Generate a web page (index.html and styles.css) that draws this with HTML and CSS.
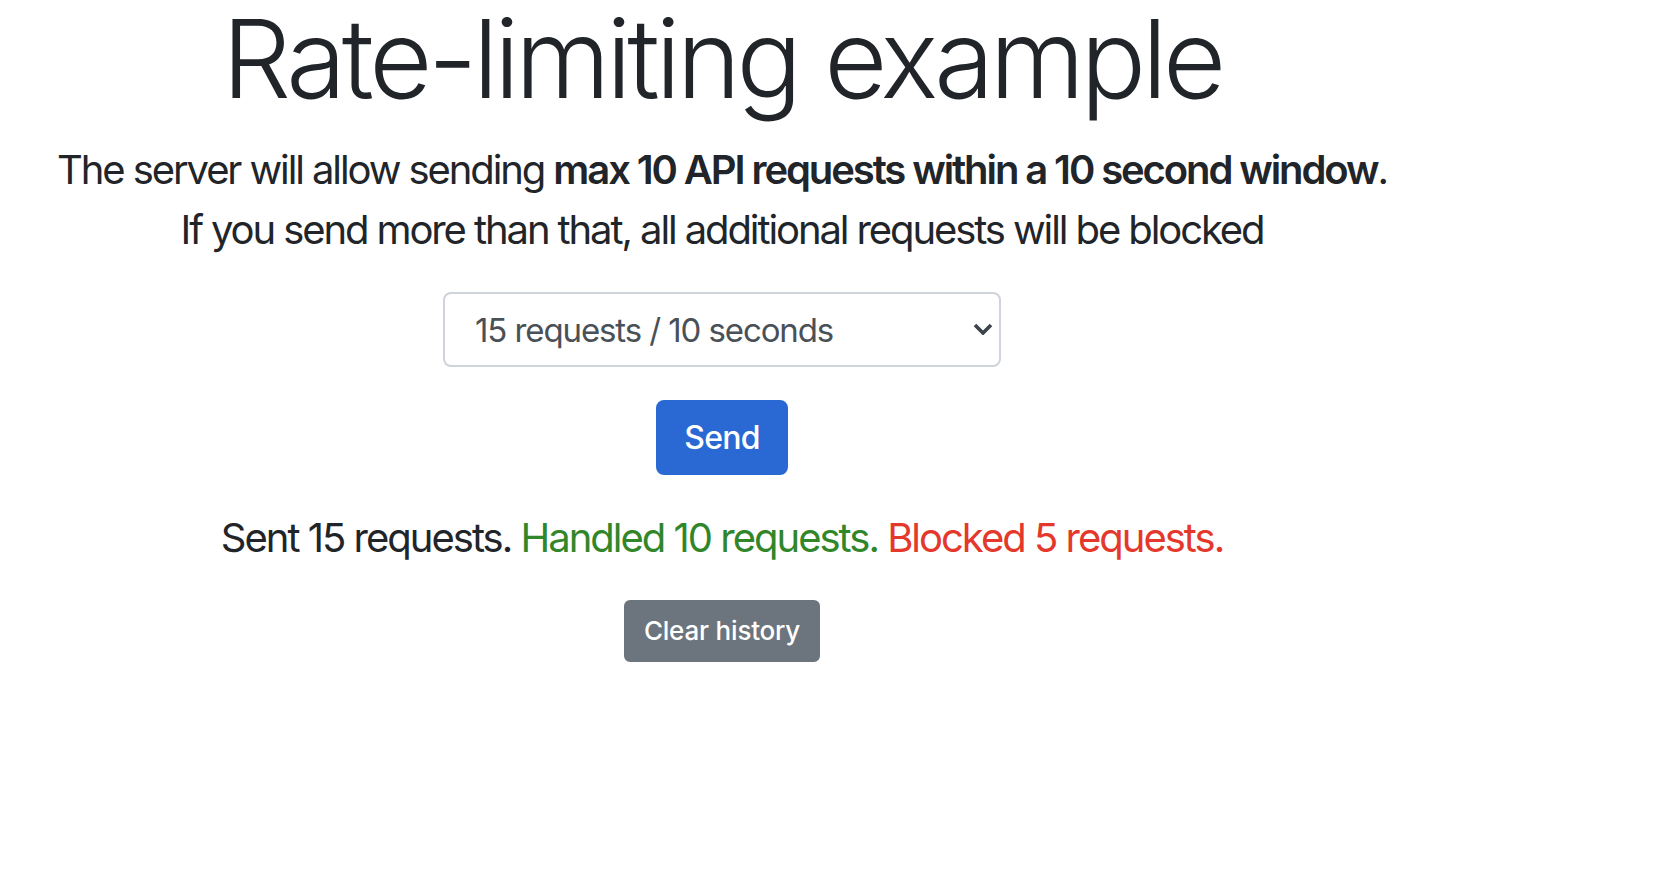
FILE: index.html
```html
<!DOCTYPE html>
<html lang="en">
<head>
<meta charset="utf-8">
<title>Rate-limiting example</title>
<link rel="stylesheet" href="styles.css">
</head>
<body>
<main class="page">
  <h1 class="title">Rate-limiting example</h1>
  <p class="lead">The server will allow sending <strong>max 10 API requests within a 10 second window</strong>.<br>If you send more than that, all additional requests will be blocked</p>
  <div class="select-wrap">
    <select class="select">
      <option>15 requests / 10 seconds</option>
    </select>
    <svg class="chevron" width="20" height="12" viewBox="0 0 20 12" aria-hidden="true">
      <path d="M2 2 L10 10 L18 2" fill="none" stroke="#3d4349" stroke-width="3.6"/>
    </svg>
  </div>
  <button class="btn btn-primary" type="button">Send</button>
  <p class="result">Sent 15 requests. <span class="ok">Handled 10 requests.</span> <span class="bad">Blocked 5 requests.</span></p>
  <button class="btn btn-secondary" type="button">Clear history</button>
</main>
</body>
</html>
```

FILE: styles.css
```css
* { box-sizing: border-box; }

html, body {
  margin: 0;
  padding: 0;
  background: #ffffff;
}

body {
  font-family: Inter, "Noto Sans", "Liberation Sans", sans-serif;
  color: #212529;
}

.page {
  width: 1444px;
  display: flex;
  flex-direction: column;
  align-items: center;
  text-align: center;
}

.title {
  margin: 2px 0 0;
  font-size: 109px;
  line-height: 112px;
  font-weight: 300;
  letter-spacing: -4.3px;
  white-space: nowrap;
}

.lead {
  margin: 26px 0 0;
  font-size: 40px;
  line-height: 60px;
  font-weight: 400;
  letter-spacing: -2.1px;
  white-space: nowrap;
}

.lead strong {
  font-weight: 600;
}

.select-wrap {
  position: relative;
  margin-top: 32px;
  width: 558px;
}

.select {
  display: block;
  width: 100%;
  height: 75px;
  margin: 0;
  padding: 0 60px 0 30px;
  font-family: inherit;
  font-size: 33px;
  letter-spacing: -1.1px;
  color: #495057;
  background: #ffffff;
  border: 2px solid #ced4da;
  border-radius: 8px;
  appearance: none;
  -webkit-appearance: none;
}

.chevron {
  position: absolute;
  right: 8px;
  top: 31px;
}

.btn {
  display: inline-block;
  margin: 0;
  font-family: inherit;
  color: #ffffff;
  border: 2px solid transparent;
  text-align: center;
  cursor: pointer;
}

.btn-primary {
  margin-top: 33px;
  height: 75px;
  padding: 0 26px;
  font-size: 32px;
  font-weight: 500;
  letter-spacing: -0.8px;
  line-height: 71px;
  background: #2a69d3;
  border-color: #2a69d3;
  border-radius: 8px;
}

.result {
  margin: 33px 0 0;
  font-size: 40px;
  line-height: 60px;
  letter-spacing: -2px;
  white-space: nowrap;
}

.ok { color: #32862a; }
.bad { color: #e3382b; }

.btn-secondary {
  margin-top: 32px;
  height: 62px;
  padding: 0 18px;
  font-size: 26px;
  font-weight: 500;
  letter-spacing: -0.2px;
  line-height: 58px;
  background: #6c757d;
  border-color: #6c757d;
  border-radius: 6px;
}
```
